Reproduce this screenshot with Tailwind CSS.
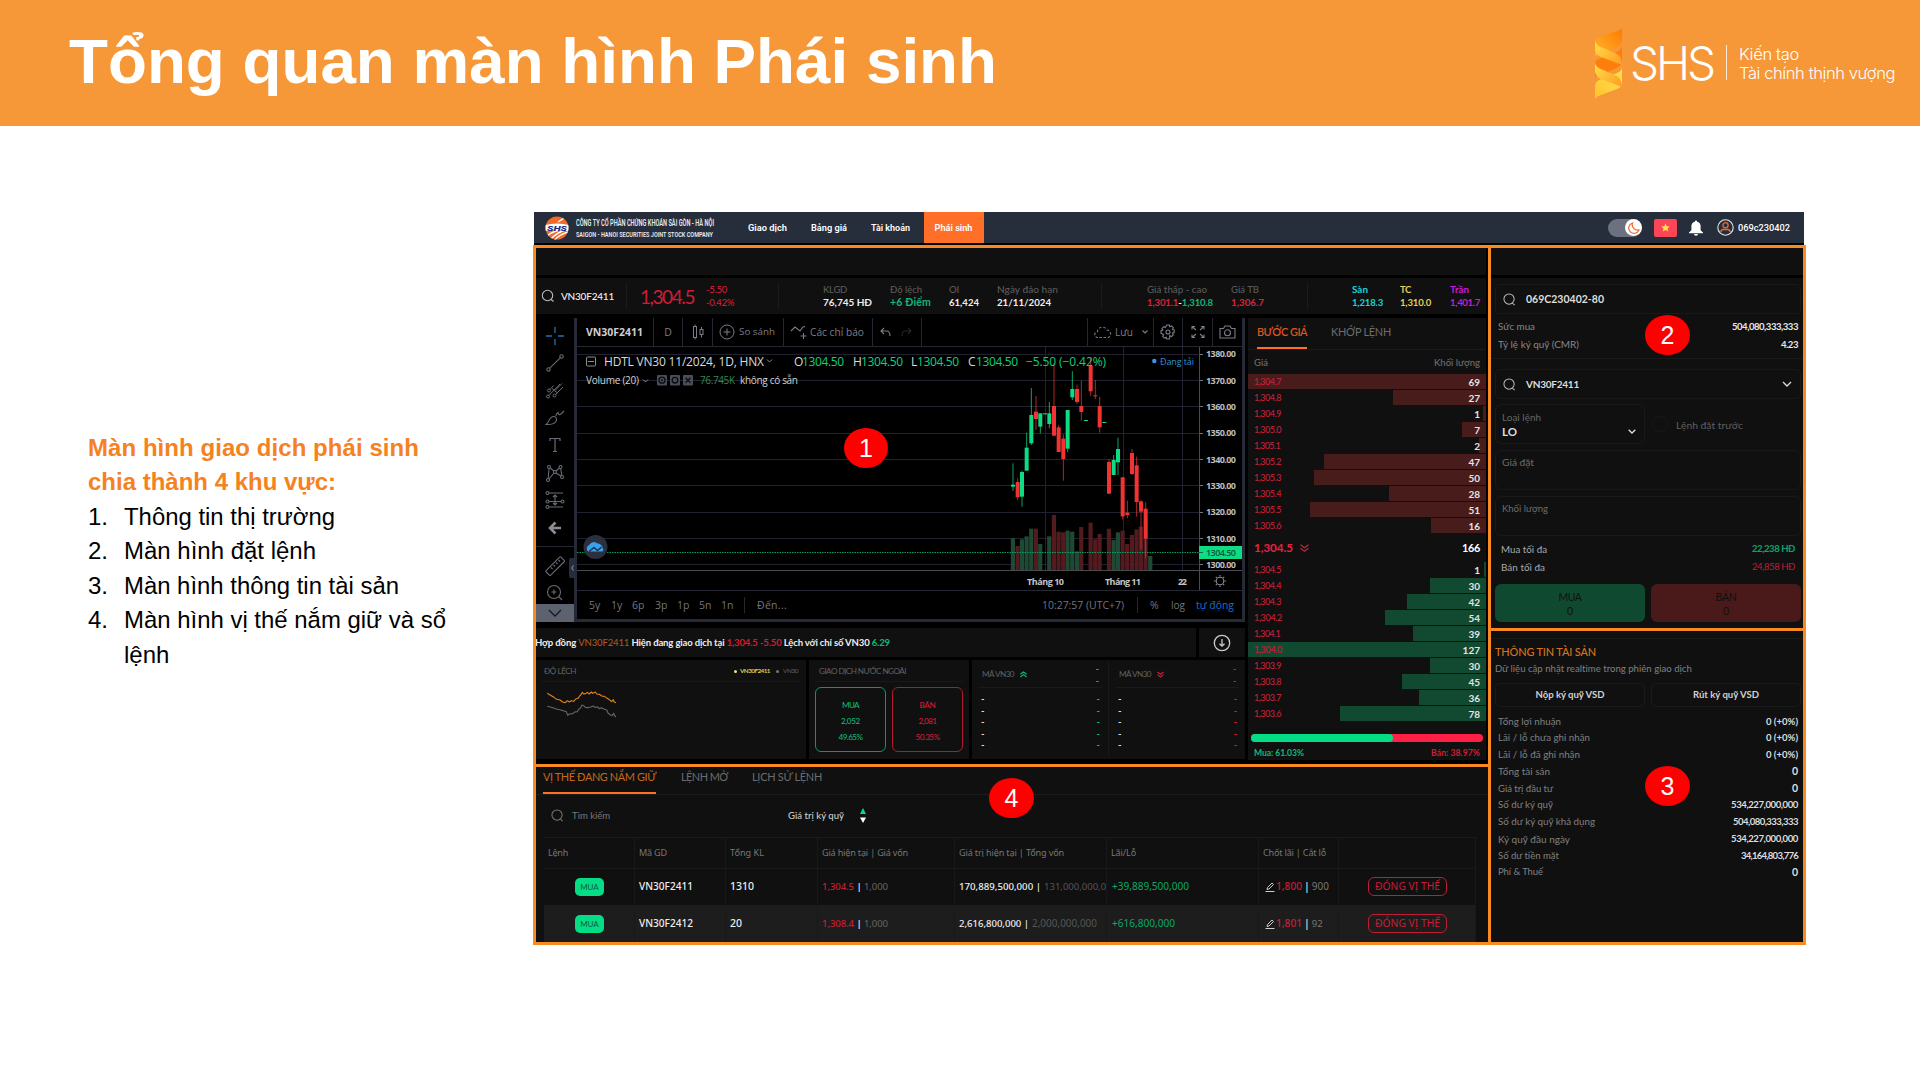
<!DOCTYPE html>
<html lang="vi">
<head>
<meta charset="utf-8">
<title>Tổng quan màn hình Phái sinh</title>
<script src="https://cdn.jsdelivr.net/npm/@tailwindcss/browser@4"></script>
</head>
<body class="relative w-[1920px] h-[1080px] overflow-hidden bg-white whitespace-nowrap leading-none font-['Liberation_Sans',sans-serif]">

<!-- Slide header -->
<header class="flex h-[126px] items-start justify-between bg-[#f69738] text-white">
  <h1 class="pl-[69px] pt-[24px] text-[64px] leading-[74px] font-bold"><span data-w="928">Tổng quan màn hình Phái sinh</span></h1>
  <div class="flex items-start pr-[25px] pt-[27px] font-[Inter,sans-serif]">
    <svg class="w-[28px] h-[72px]" viewBox="0 0 28 72">
      <defs>
        <linearGradient id="g1" x1="0" y1="1" x2="1" y2="0"><stop offset="0" stop-color="#ffb52e"/><stop offset="1" stop-color="#ff7a00"/></linearGradient>
        <linearGradient id="g2" x1="0" y1="0" x2="1" y2="1"><stop offset="0" stop-color="#ffe04a"/><stop offset="1" stop-color="#ff9a22"/></linearGradient>
        <linearGradient id="g3" x1="0" y1="1" x2="1" y2="0"><stop offset="0" stop-color="#ffc32e"/><stop offset="1" stop-color="#ffe24f"/></linearGradient>
      </defs>
      <path d="M0 14 Q1 11 6 9 L22 4 Q26 3 27 0 V14 Q27 18 22 20 L0 29Z" fill="url(#g1)"/>
      <path d="M0 36 Q1 33 6 31 L22 25 Q27 22 27 18 V34 Q27 38 22 41 L0 50Z" fill="#ff7d0a"/>
      <path d="M0 58 Q1 54 6 52 L22 46 Q27 44 27 40 V56 Q27 60 22 62 L6 68 Q1 70 0 72Z" fill="url(#g3)"/>
      <path d="M0 14 Q1 18 6 20 L22 27 Q27 30 27 38 L6 30 Q0 27 0 22Z" fill="url(#g2)"/>
      <path d="M0 36 Q1 40 6 42 L22 49 Q27 52 27 60 L6 52 Q0 49 0 44Z" fill="url(#g2)"/>
    </svg>
    <div class="w-[103px] pl-[7px] pt-[10px] text-[46px] leading-[52px] font-light"><span data-w="83" data-keep>SHS</span></div>
    <div class="mt-[18px] h-[35px] w-px bg-white/80"></div>
    <div class="w-[168px] pl-[12px] pt-[18px] text-[16.5px] leading-[19px] font-light">
      <div><span data-w="60" data-keep>Kiến tạo</span></div>
      <div><span data-w="156" data-keep>Tài chính thịnh vượng</span></div>
    </div>
  </div>
</header>

<div class="flex items-start">
  <!-- Legend -->
  <section class="w-[533px] pl-[88px] pt-[304.5px] text-[24px] leading-[34.6px] text-black">
    <div class="font-bold text-[#f5821f]">
      <div><span data-w="331">Màn hình giao dịch phái sinh</span></div>
      <div><span data-w="248">chia thành 4 khu vực:</span></div>
    </div>
    <ol>
      <li class="flex"><span class="w-[36px]">1.</span><span data-w="211">Thông tin thị trường</span></li>
      <li class="flex"><span class="w-[36px]">2.</span><span data-w="192">Màn hình đặt lệnh</span></li>
      <li class="flex"><span class="w-[36px]">3.</span><span data-w="275">Màn hình thông tin tài sản</span></li>
      <li class="flex"><span class="w-[36px]">4.</span><span><span data-w="322">Màn hình vị thế nắm giữ và sổ</span><br>lệnh</span></li>
    </ol>
  </section>

  <!-- Trading screen -->
  <main class="mt-[86px] w-[1273px] font-[Lato,sans-serif] text-[10.5px]">
    <!-- Navigation -->
    <nav class="ml-px mr-[2px] flex h-[33px] items-center border-b-2 border-black bg-[#262d3b] text-[9.5px] font-semibold text-white font-[Roboto,sans-serif]">
      <svg class="ml-[11px] w-[24px] h-[24px]" viewBox="0 0 24 24">
        <defs><clipPath id="lc"><circle cx="12" cy="12" r="11.5"/></clipPath></defs>
        <circle cx="12" cy="12" r="11.5" fill="#f26a2a"/>
        <g clip-path="url(#lc)"><path d="M0 9 Q12 6 24 9 V15.500 Q12 13 0 15Z" fill="#fff"/><path d="M5 24 Q12 16 23 13 M9 25 Q14 18 24 16 M13 6 Q18 3 22 0 M2 20 Q8 15 18 13" stroke="#fff" stroke-width="1.4" fill="none"/></g>
        <text x="12" y="14.600" text-anchor="middle" font-size="7.500" font-weight="900" font-style="italic" fill="#1c2f8c" textLength="20" lengthAdjust="spacingAndGlyphs">SHS</text>
      </svg>
      <div class="ml-[7px] w-[172px]">
        <svg class="block w-[140px] h-[25px] overflow-visible font-[Roboto,sans-serif] font-semibold" viewBox="0 0 140 25" fill="#e8eaee"><text x="0" y="10.500" font-size="8.800" textLength="138" lengthAdjust="spacingAndGlyphs">CÔNG TY CỔ PHẦN CHỨNG KHOÁN SÀI GÒN - HÀ NỘI</text><text x="0" y="22" font-size="7.500" textLength="137" lengthAdjust="spacingAndGlyphs">SAIGON - HANOI SECURITIES JOINT STOCK COMPANY</text></svg>
      </div>
      <div class="w-[63px]"><span data-w="39">Giao dịch</span></div>
      <div class="w-[60px]"><span data-w="36">Bảng giá</span></div>
      <div class="w-[52.500px]"><span data-w="39">Tài khoản</span></div>
      <div class="flex h-full w-[60px] items-center justify-center bg-[#ff6f27]"><span data-w="38">Phái sinh</span></div>
      <div class="ml-auto flex items-center pr-[14px]">
        <div class="flex h-[18px] w-[34px] items-center justify-end rounded-full bg-[#6b7180]">
          <div class="flex size-[17px] items-center justify-center rounded-full bg-white"><svg class="size-[12px]" viewBox="0 0 12 12" fill="none" stroke="#f26a2a" stroke-width="1.2"><path d="M4.500 1 A5.300 5.300 0 1 0 11 8 A5.500 5.500 0 0 1 4.500 1Z"/></svg></div>
        </div>
        <div class="ml-[12px] flex h-[18px] w-[23px] items-center justify-center rounded-[2px] bg-[#fb4655]"><svg class="size-[9px]" viewBox="0 0 24 24" fill="#ffe14d"><path d="M12 1l3.300 7.600 8.200.7-6.200 5.400 1.900 8L12 18.400 4.800 22.700l1.900-8L.5 9.300l8.200-.7z"/></svg></div>
        <svg class="ml-[12px] w-[14px] h-[16px]" viewBox="0 0 14 16" fill="#fff"><path d="M7 .5a1.200 1.200 0 0 1 1.200 1.200A4.600 4.600 0 0 1 11.600 6v4.200L14 12.500v.8H0v-.8l2.400-2.300V6a4.600 4.600 0 0 1 3.400-4.300A1.200 1.200 0 0 1 7 .5ZM5 14h4a2 1.800 0 0 1-4 0Z"/></svg>
        <svg class="ml-[14px] size-[17px]" viewBox="0 0 17 17" fill="none"><circle cx="8.500" cy="8.500" r="7.700" stroke="#e8e8ea" stroke-width="1.100"/><g stroke="#f26a2a" stroke-width="1.300"><circle cx="8.500" cy="6.300" r="2.600"/><path d="M3.800 13 Q4 10.500 6.500 10.500 H10.500 Q13 10.500 13.200 13"/></g></svg>
        <span class="ml-[4px] font-medium" data-w="52">069c230402</span>
      </div>
    </nav>

    <!-- Highlighted regions -->
    <div class="flex h-[700px] border-3 border-[#f98a22] bg-black">
      <div class="flex w-[955px] flex-col border-r-3 border-[#f98a22]">

        <!-- Region 1: market information -->
        <section class="h-[519px] border-b-3 border-[#f98a22] pr-[2px]">
          <div class="h-[27px] bg-[#101010]"></div>
          <!-- Ticker -->
          <div class="mt-[3px] flex h-[36px] items-center bg-[#101010] text-[#5a5a5a] font-medium leading-[13px]">
            <svg class="ml-[5px] size-[14px]" viewBox="0 0 14 14" fill="none" stroke="#bbb" stroke-width="1.100"><circle cx="6.500" cy="6.500" r="5.200"/><path d="M10 10.500l2.600 2"/></svg>
            <div class="ml-[6px] flex h-[24px] w-[66px] items-center border-r border-[#1c1c1c] text-[11px] text-[#f0f0f0]"><span data-w="53">VN30F2411</span></div>
            <div class="w-[66px] pl-[13px] text-[19px] font-normal text-[#d01c36]"><span data-w="54" data-keep>1,304.5</span></div>
            <div class="h-[24px] w-[86px] border-r border-[#1c1c1c] pl-[13px] leading-[13px] text-[#d01c36]"><div class="-mt-px"><span data-w="21">-5.50</span></div><div><span data-w="28">-0.42%</span></div></div>
            <div class="w-[111px] pl-[44px]"><div><span data-w="24">KLGD</span></div><div class="font-bold text-[#eee]"><span data-w="49">76,745 HĐ</span></div></div>
            <div class="w-[59px]"><div><span data-w="32">Độ lệch</span></div><div class="font-bold text-[#0fb877]"><span data-w="41">+6 Điểm</span></div></div>
            <div class="w-[48px]"><div><span data-w="10">OI</span></div><div class="font-bold text-[#eee]"><span data-w="30">61,424</span></div></div>
            <div class="w-[105px] border-r border-[#1c1c1c]"><div><span data-w="61">Ngày đáo hạn</span></div><div class="font-bold text-[#eee]"><span data-w="54">21/11/2024</span></div></div>
            <div class="w-[129px] pl-[45px]"><div><span data-w="60">Giá thấp - cao</span></div><div class="font-bold text-[#d8233c]"><span data-w="66">1,301.1<span class="text-[#eee]">-</span><span class="text-[#0fb877]">1,310.8</span></span></div></div>
            <div class="w-[77px] border-r border-[#1c1c1c]"><div><span data-w="28">Giá TB</span></div><div class="font-bold text-[#d8233c]"><span data-w="33">1,306.7</span></div></div>
            <div class="w-[92px] pl-[44px] font-bold text-[#17d3d3]"><div><span data-w="16">Sàn</span></div><div><span data-w="31">1,218.3</span></div></div>
            <div class="w-[50px] font-bold text-[#e3cd5c]"><div><span data-w="11">TC</span></div><div><span data-w="31">1,310.0</span></div></div>
            <div class="font-bold text-[#c71ad6]"><div><span data-w="19">Trần</span></div><div><span data-w="30">1,401.7</span></div></div>
          </div>

          <div class="mt-[4px] flex">
            <div class="w-[709px]">
              <!-- Chart widget -->
              <div class="flex h-[304px] w-full font-['Open_Sans',sans-serif] text-[#7b7d87]">
                <div id="tools" class="relative flex w-[38px] flex-col items-center pt-[4px] text-[#696c78]">
                  <div class="flex h-[27.4px] items-center"><svg class="size-[20px]" viewBox="0 0 20 20" fill="none" stroke="#2a6fae" stroke-width="1.300"><path d="M10 1v6M10 13v6M1 10h6M13 10h6"/></svg></div>
                  <div class="flex h-[27.4px] items-center"><svg class="size-[20px]" viewBox="0 0 20 20" fill="none" stroke="currentColor" stroke-width="1.100"><circle cx="3.500" cy="16.500" r="1.700"/><circle cx="16.500" cy="3.500" r="1.700"/><path d="M4.800 15.200L15.200 4.800"/></svg></div>
                  <div class="flex h-[27.4px] items-center"><svg class="size-[20px]" viewBox="0 0 20 20" fill="none" stroke="currentColor" stroke-width="1"><circle cx="4" cy="10.500" r="1.500"/><circle cx="9.500" cy="15.500" r="1.500"/><circle cx="3" cy="16.500" r="1.500"/><path d="M4 15.300L15 4M5 9.500l3.500-4M7 8.500l5.500 4.500M10.500 14.500L18 7M10 10.500l7-7"/></svg></div>
                  <div class="flex h-[27.4px] items-center"><svg class="size-[20px]" viewBox="0 0 20 20" fill="none" stroke="currentColor" stroke-width="1.100"><path d="M1 16.500C4 15 4 8.500 8.500 8.500c3 0 4 3 2 5.500-2 2.500-6 2.700-9.500 2.500ZM11 8c0-3 1-3 2-3.500 0 2 1.500 2.700 3 1.500L19 3"/></svg></div>
                  <div class="flex h-[27.4px] items-center"><svg class="size-[20px]" viewBox="0 0 20 20" fill="none" stroke="currentColor" stroke-width="1.200"><path d="M5 6V3.500h10V6M10 3.500v13M8 16.500h4"/></svg></div>
                  <div class="flex h-[27.4px] items-center"><svg class="size-[20px]" viewBox="0 0 20 20" fill="none" stroke="currentColor" stroke-width="1.100"><circle cx="4" cy="4" r="1.500"/><circle cx="3" cy="17" r="1.500"/><circle cx="10" cy="9" r="1.500"/><circle cx="15.500" cy="4" r="1.500"/><circle cx="17" cy="14" r="1.500"/><path d="M4 5.500L3.200 15.500M5 5l4 3M11 8l3.500-3M15.700 5.500l1.100 7M4 16l5-6M11 10l5 3"/></svg></div>
                  <div class="flex h-[27.4px] items-center"><svg class="size-[20px]" viewBox="0 0 20 20" fill="none" stroke="currentColor" stroke-width="1.100"><circle cx="2.500" cy="3" r="1.500"/><circle cx="2.500" cy="17" r="1.500"/><circle cx="2.500" cy="11.500" r="1.500"/><circle cx="17.500" cy="11.500" r="1.500"/><path d="M4 3h14M4 17h14M4 11.500h12M10 5v10M8 7l2-2 2 2M8 13l2 2 2-2"/></svg></div>
                  <div class="mt-px flex h-[27.4px] items-center"><svg class="size-[20px]" viewBox="0 0 20 20" fill="none" stroke="#8a8c96" stroke-width="2.600"><path d="M16 10H6M10.500 4.500L5 10l5.500 5.500"/></svg></div>
                  <div class="mt-[4px] h-px w-full bg-[#252833]"></div>
                  <div class="mt-[5px] flex h-[27.4px] items-center"><svg class="size-[20px]" viewBox="0 0 20 20" fill="none" stroke="currentColor" stroke-width="1.100"><rect x="-.5" y="7" width="21" height="6.500" rx="1" transform="rotate(-45 10 10)"/><path d="M6 11.500l1.500 1.500M8.500 9l1.500 1.500M11 6.500l1.500 1.500M13.500 4l1.500 1.500"/></svg></div>
                  <div class="flex h-[26px] items-center"><svg class="size-[18px]" viewBox="0 0 18 18" fill="none" stroke="currentColor" stroke-width="1.100"><circle cx="8" cy="8" r="6.500"/><path d="M12.700 12.700L16 16M8 5.500v5M5.500 8h5"/></svg></div>
                  <div class="absolute inset-x-0 bottom-0 flex h-[18px] items-center justify-center bg-[#5c636e]"><svg class="w-[14px] h-[8px]" viewBox="0 0 14 8" fill="none" stroke="#15181f" stroke-width="1.300"><path d="M1 1l6 6 6-6"/></svg></div>
                  <div class="absolute right-[-1px] top-[240px] flex h-[20px] w-[6px] items-center justify-center rounded-l-[2px] bg-[#252c3d]"><svg class="w-[3px] h-[6px]" viewBox="0 0 3 6" fill="none" stroke="#9a9ca6" stroke-width="1"><path d="M2.500 .5L.7 3l1.800 2.500"/></svg></div>
                </div>

                <div class="flex w-[671px] flex-col border-x-3 border-b-3 border-[#262a36]">
                  <!-- Chart toolbar -->
                  <div class="flex h-[29px] border-b border-[#252833] text-[10.5px] *:flex *:items-center *:border-[#252833]">
                    <div class="w-[77px] border-r pl-[9px] font-bold text-[#ccced3] text-[10.5px]"><span data-w="57">VN30F2411</span></div>
                    <div class="w-[29px] justify-center border-r">D</div>
                    <div class="w-[30px] justify-center border-r"><svg class="w-[12px] h-[16px]" viewBox="0 0 12 16" fill="none" stroke="currentColor" stroke-width="1"><path d="M3 .5v2M3 13.500v2M9.500 3v2.500M9.500 10.500v3"/><rect x="1.500" y="2.500" width="3" height="11"/><rect x="8" y="5.500" width="3" height="5"/></svg></div>
                    <div class="w-[71px] border-r pl-[6px]"><svg class="size-[16px] shrink-0" viewBox="0 0 16 16" fill="none" stroke="currentColor" stroke-width="1"><circle cx="8" cy="8" r="7"/><path d="M8 4.500v7M4.500 8h7"/></svg><span class="ml-[4px]" data-w="36">So sánh</span></div>
                    <div class="w-[89px] border-r pl-[6px]"><svg class="w-[18px] h-[16px] shrink-0" viewBox="0 0 18 16" fill="none" stroke="currentColor" stroke-width="1.100"><path d="M1 7l4-4 5 4 3-4 2-.5M13.500 9v6M10.500 12h6"/></svg><span class="ml-[2px]" data-w="54">Các chỉ báo</span></div>
                    <div class="w-[49px] gap-[10px] border-r pl-[7px]"><svg class="w-[11px] h-[10px]" viewBox="0 0 11 10" fill="none" stroke="currentColor" stroke-width="1.100"><path d="M4 1L1 4l3 3M1 4h5.500Q10 4 10 9"/></svg><svg class="w-[11px] h-[10px] text-[#24262e]" viewBox="0 0 11 10" fill="none" stroke="currentColor" stroke-width="1.100"><path d="M7 1l3 3-3 3M10 4H4.500Q1 4 1 9"/></svg></div>
                    <div class="ml-auto w-[67px] border-x pl-[6px]"><svg class="w-[18px] h-[14px]" viewBox="0 0 18 14" fill="none" stroke="currentColor" stroke-width="1.100" stroke-dasharray="2.500 1.800"><path d="M4 12.500a3 3 0 0 1-.5-6A5 5 0 0 1 13 5a4 4 0 0 1 1.500 7.500Z"/></svg><span class="ml-[3px]" data-w="18">Lưu</span><svg class="ml-[9px] w-[6px] h-[4px]" viewBox="0 0 6 4" fill="none" stroke="currentColor" stroke-width="1.100"><path d="M.5.5L3 3 5.500.5"/></svg></div>
                    <div class="w-[29px] justify-center border-r"><svg class="size-[16px]" viewBox="0 0 16 16" fill="none" stroke="currentColor" stroke-width="1.100"><circle cx="8" cy="8" r="2"/><path d="M6.700 1h2.600l.5 1.800 1.700-.9 1.800 1.800-.9 1.700 1.800.6v2.600l-1.800.5.9 1.700-1.800 1.800-1.700-.9L9.300 15H6.700l-.5-1.800-1.700.9-1.800-1.800.9-1.700L1 9.300V6.700l1.800-.5-.9-1.700 1.800-1.800 1.700.9Z"/></svg></div>
                    <div class="w-[30px] justify-center border-r"><svg class="size-[14px]" viewBox="0 0 14 14" fill="none" stroke="currentColor" stroke-width="1.100"><path d="M1 4.500V1.500h3M1 1.500l4 3.500M13 4.500V1.500h-3M13 1.500l-4 3.500M1 9.500v3h3M1 12.500l4-3.500M13 9.500v3h-3M13 12.500l-4-3.500"/></svg></div>
                    <div class="w-[29px] justify-center"><svg class="w-[17px] h-[14px]" viewBox="0 0 17 14" fill="none" stroke="currentColor" stroke-width="1.100"><path d="M1 3.500h3.500L6 1h5l1.500 2.500H16V13H1Z"/><circle cx="8.500" cy="7.700" r="3"/></svg></div>
                  </div>
                  <!-- Chart canvas -->
                  <svg id="chart" class="block w-[665px] h-[243px] font-['Open_Sans',sans-serif]" viewBox="577 347 665 243"></svg>
                  <!-- Range bar -->
                  <div class="flex h-[29px] items-center border-t border-[#252833] pl-[12px] text-[10.5px] text-[#73757f]">
                    <span class="w-[22px]">5y</span><span class="w-[21px]">1y</span><span class="w-[23px]">6p</span><span class="w-[22px]">3p</span><span class="w-[22px]">1p</span><span class="w-[22px]">5n</span><span class="w-[23px]">1n</span>
                    <span class="h-[16px] w-px bg-[#252833]"></span><span class="ml-[12px]" data-w="30">Đến...</span>
                    <span class="ml-auto" data-w="82">10:27:57 (UTC+7)</span><span class="ml-[13px] h-[16px] w-px bg-[#252833]"></span>
                    <span class="ml-[12px] w-[21px]">%</span><span class="w-[25px]"><span data-w="14">log</span></span><span class="mr-[8px] text-[#1b6fd0]" data-w="38">tự động</span>
                  </div>
                </div>
              </div>

              <!-- Ticker message -->
              <div class="mt-[6px] flex h-[29px] gap-[3px]">
                <div class="flex w-[660px] items-center overflow-hidden bg-[#101010] text-[10.5px] font-bold text-[#ededed]"><span class="-ml-px" data-w="355">Hợp đồng <span class="font-medium text-[#a5561b]">VN30F2411</span> Hiện đang giao dịch tại <span class="text-[#d01c36]">1,304.5 -5.50</span> Lệch với chỉ số VN30 <span class="text-[#0fb877]">6.29</span></span></div>
                <div class="flex flex-1 items-center justify-center bg-[#101010]"><svg class="size-[18px]" viewBox="0 0 18 18" fill="none" stroke="#ccc" stroke-width="1.300"><circle cx="9" cy="9" r="7.700"/><path d="M9 5v7M6.500 9.700L9 12.200l2.500-2.500"/></svg></div>
              </div>

              <!-- Market cards -->
              <div class="mt-[3px] flex h-[99px] gap-[3px] text-[9px] text-[#626262]">
                <div class="w-[270px] bg-[#101010] px-[6px]">
                  <div class="flex h-[22px] items-center border-b border-[#191919] pl-[2px] pr-[2px] pt-px"><span data-w="32">ĐỘ LỆCH</span>
                    <span class="ml-auto size-[3px] rounded-full bg-[#efe070]"></span><span class="ml-[3px] text-[7px] font-bold text-[#d8cb57]" data-w="30">VN30F2411</span><span class="ml-[6px] size-[3px] rounded-full bg-[#777]"></span><span class="ml-[4px] text-[7px]" data-w="15">VN30</span></div>
                  <svg class="mt-[8px] ml-[5px] block w-[70px] h-[28px]" viewBox="53 210 210 84" fill="none" stroke-width="3.300" stroke-linejoin="round"><path stroke="#e8821c" d="M54 220l12 7 8 5 8 6 10 2 8 6 8 2 6-6 6 4 6-4 7 2 6-7 7-2 5-7 4-4 4-7 4 5 6-1 5-4 6 5 6-6 4 4 8-4 4 6 9 1 6 5 8 1 6 4 5 3 5 4 6 5 5-6 2 6 6 3"/><path stroke="#686868" d="M54 259l12 3 15 5 14 3 16 5 4 11 5-4 10-1 6-5 8-1 4-7 5-3 5-10 5 2 5 5 8 1 8-2 8-3 5 4 8-1 5 5 6-3 8 4 8 3 4 9 6 5 6 3 5-7 3 7 4 4"/></svg>
                </div>
                <div class="w-[160px] bg-[#101010] px-[6px]">
                  <div class="flex h-[22px] items-center border-b border-[#191919] pl-[4px] pt-px"><span data-w="87">GIAO DỊCH NƯỚC NGOÀI</span></div>
                  <div class="mt-[5px] flex gap-[6px] text-[9px] font-medium leading-[15.2px] text-center">
                    <div class="h-[65px] w-[71px] rounded-[6px] border border-[#0c9862] pt-[9px] text-[#0fb877]"><div><span data-w="17">MUA</span></div><div><span data-w="19">2,052</span></div><div><span data-w="24">49.65%</span></div></div>
                    <div class="h-[65px] w-[71px] rounded-[6px] border border-[#b01a31] pt-[9px] text-[#d01c36]"><div><span data-w="16">BÁN</span></div><div><span data-w="18">2,081</span></div><div><span data-w="24">50.35%</span></div></div>
                  </div>
                </div>
                <div class="flex flex-1 bg-[#101010] py-[2px]" id="vn30"></div>
              </div>
            </div>

            <!-- Order book -->
            <div class="ml-[3px] flex h-[442px] flex-1 flex-col bg-[#101010] text-[#6d6d6d]">
              <div class="flex h-[32px] border-b border-[#1c1c1c] text-[12px]">
                <div class="ml-[9px] flex h-[31px] w-[50px] items-center border-b-2 border-[#ff6f27] font-semibold text-[#dd5520]"><span class="pb-[1px]" data-w="50">BƯỚC GIÁ</span></div>
                <div class="ml-[24px] flex h-[29px] items-center"><span data-w="60">KHỚP LỆNH</span></div>
              </div>
              <div class="flex h-[24px] items-center justify-between px-[6px] pt-px font-medium"><span data-w="14">Giá</span><span data-w="46">Khối lượng</span></div>
              <div id="asks"></div>
              <div class="flex h-[28px] items-center px-[6px] text-[12px] font-bold text-[#f0203f]"><span data-w="39">1,304.5</span><svg class="ml-[7px] w-[9px] h-[8px]" viewBox="0 0 9 8" fill="none" stroke="#b82a3c" stroke-width="1.200"><path d="M.5.700L4.500 3.700 8.500.700M.5 4.200l4 3 4-3"/></svg><span class="ml-auto text-white" data-w="18">166</span></div>
              <div id="bids"></div>
              <div class="mx-[3px] mt-[12px] flex h-[8px] rounded-full bg-[#ff2045]"><div class="w-[61.03%] rounded-full bg-[#05dc86]"></div></div>
              <div class="mt-[4px] flex justify-between px-[6px] text-[9.5px] font-bold leading-[13px]"><span class="text-[#0fb877]" data-w="50">Mua: 61.03%</span><span class="text-[#d01c36]" data-w="49">Bán: 38.97%</span></div>
            </div>
          </div>
        </section>

        <!-- Region 4: positions and order log -->
        <section class="flex-1 overflow-hidden bg-[#101010]">
          <div class="flex h-[28px] border-b border-[#1c1c1c] pl-[7px] text-[12px] text-[#6c6c6c]">
            <div class="flex h-[27px] w-[113px] items-center border-b-2 border-[#ff6f27] pb-[5px] text-[#c06a1c]"><span data-w="113">VỊ THẾ ĐANG NẮM GIỮ</span></div>
            <div class="ml-[25px] flex h-[20px] w-[71px] items-center"><span data-w="47">LỆNH MỞ</span></div>
            <div class="flex h-[20px] items-center"><span data-w="70">LỊCH SỬ LỆNH</span></div>
          </div>
          <div class="flex h-[42px] items-center pb-[2px] pl-[15px] text-[#777]">
            <svg class="size-[13px]" viewBox="0 0 14 14" fill="none" stroke="#777" stroke-width="1.100"><circle cx="6.500" cy="6.500" r="5.500"/><path d="M10 11l2.600 2"/></svg>
            <span class="ml-[8px] w-[216px]"><span data-w="38">Tìm kiếm</span></span><span class="pt-[1px] font-medium text-[#ccc]" data-w="56">Giá trị ký quỹ</span>
            <svg class="ml-[16px] mt-px w-[6px] h-[15px]" viewBox="0 0 6 15"><path d="M0 6L3 0l3 6Z" fill="#05dc86"/><path d="M0 9.500h6L3 15Z" fill="#fff"/></svg>
          </div>
          <div id="positions" class="ml-[8px] w-[932px] border-t border-[#1a1a1a] font-['Noto_Sans',sans-serif] text-[10.5px]"></div>
        </section>
      </div>

      <div class="flex w-[312px] flex-col text-[10.5px]">
        <!-- Region 2: order entry -->
        <section class="h-[383px] border-b-3 border-[#f98a22] bg-[#101010] text-[#888]">
          <div class="h-[30px] border-b-3 border-black"></div>
          <div class="pl-[4px] pr-[2px] pt-[6px]">
            <div class="flex h-[30px] items-center rounded-[5px] border border-[#191919] pl-[7px] text-[11px] font-bold text-[#ddd]"><svg class="size-[13px]" viewBox="0 0 14 14" fill="none" stroke="#bbb" stroke-width="1.100"><circle cx="6.500" cy="6.500" r="5.500"/><path d="M10 11l2.600 2"/></svg><span class="ml-[10px]" data-w="78">069C230402-80</span></div>
            <div class="flex h-[19px] items-end justify-between px-[3px] leading-[13px]"><span data-w="37">Sức mua</span><span class="font-bold text-[#e8e8e8]" data-w="66">504,080,333,333</span></div>
            <div class="flex h-[18px] items-end justify-between px-[3px] leading-[13px]"><span data-w="81">Tỷ lệ ký quỹ (CMR)</span><span class="font-bold text-[#e8e8e8]" data-w="17">4.23</span></div>
          </div>
          <div class="mt-[7px] border-t border-[#1a1a1a]"></div>
          <div class="pl-[4px] pr-[2px] pt-[10px]">
            <div class="flex h-[30px] items-center rounded-[5px] border border-[#191919] pl-[7px] text-[11px] font-bold text-[#ddd]"><svg class="size-[13px]" viewBox="0 0 14 14" fill="none" stroke="#bbb" stroke-width="1.100"><circle cx="6.500" cy="6.500" r="5.500"/><path d="M10 11l2.600 2"/></svg><span class="ml-[10px]" data-w="53">VN30F2411</span><svg class="ml-auto mr-[8px] w-[10px] h-[6px]" viewBox="0 0 10 6" fill="none" stroke="#ddd" stroke-width="1.300"><path d="M1 1l4 4 4-4"/></svg></div>
            <div class="mt-[5px] flex h-[40px] items-center">
              <div class="flex h-[40px] w-[150px] items-center justify-between rounded-[6px] border border-[#191919] pl-[6px] pr-[8px]"><div class="pt-px leading-[14.500px]"><div class="text-[#666]"><span data-w="39">Loại lệnh</span></div><div class="text-[11.5px] font-bold text-[#ddd]">LO</div></div><svg class="mt-[14px] w-[8px] h-[5px]" viewBox="0 0 8 5" fill="none" stroke="#ddd" stroke-width="1.300"><path d="M.7.700L4 4 7.300.700"/></svg></div>
              <span class="ml-[7px] size-[16px] rounded-full border border-[#191919]"></span><span class="ml-[8px] pt-[2px] text-[#5f5f5f]" data-w="67">Lệnh đặt trước</span>
            </div>
            <div class="mt-[6px] h-[40px] rounded-[6px] border border-[#191919] pl-[6px] pt-[4px] leading-[15px] text-[#6c6c6c]"><span data-w="32">Giá đặt</span></div>
            <div class="mt-[6px] h-[40px] rounded-[6px] border border-[#191919] pl-[6px] pt-[4px] leading-[15px] text-[#6c6c6c]"><span data-w="46">Khối lượng</span></div>
            <div class="flex h-[48px] flex-col justify-center pb-[4px] pl-[6px] pr-[6px] leading-[18px]">
              <div class="flex justify-between text-[#aaa]"><span data-w="46">Mua tối đa</span><span class="font-bold text-[#0ba46a]" data-w="43">22,238 HĐ</span></div>
              <div class="flex justify-between text-[#aaa]"><span data-w="44">Bán tối đa</span><span class="text-[#c01c35]" data-w="43">24,858 HĐ</span></div>
            </div>
            <div class="flex gap-[6px] text-center leading-[14px] text-[#111]">
              <div class="h-[38px] w-[150px] rounded-[6px] bg-[#0f4a30] pt-[6px]"><div class="text-[11.5px]"><span data-w="23">MUA</span></div><div>0</div></div>
              <div class="h-[38px] w-[150px] rounded-[6px] bg-[#4a1919] pt-[6px]"><div class="text-[11.5px]"><span data-w="21">BÁN</span></div><div>0</div></div>
            </div>
          </div>
        </section>

        <!-- Region 3: assets -->
        <section class="flex-1 bg-[#101010] pt-[7px]">
          <div class="border-t border-[#1a1a1a] pl-[4px] pr-[2px] pt-[4px]">
            <div class="text-[12px] leading-[17px] font-medium text-[#d9741c]"><span data-w="101">THÔNG TIN TÀI SẢN</span></div>
            <div class="leading-[17px] text-[#808080]"><span data-w="197">Dữ liệu cập nhật realtime trong phiên giao dịch</span></div>
            <div class="mt-[6px] flex gap-[6px] font-bold text-[#d0d0d0] *:flex *:h-[24px] *:w-[150px] *:items-center *:justify-center *:rounded-[5px] *:border *:border-[#1a1a1a]"><div><span data-w="69">Nộp ký quỹ VSD</span></div><div><span data-w="66">Rút ký quỹ VSD</span></div></div>
            <div id="assets" class="mt-[6px] px-[3px] text-[#808080]"></div>
          </div>
        </section>
      </div>
    </div>
  </main>
</div>

<!-- Numbered markers -->
<div class="absolute left-[844px] top-[428px] flex h-[40px] w-[44px] items-center justify-center rounded-[50%] bg-[#fe0000] text-[25px] text-white">1</div>
<div class="absolute left-[1645px] top-[315px] flex h-[40px] w-[45px] items-center justify-center rounded-[50%] bg-[#fe0000] text-[25px] text-white">2</div>
<div class="absolute left-[1645px] top-[766px] flex h-[40px] w-[45px] items-center justify-center rounded-[50%] bg-[#fe0000] text-[25px] text-white">3</div>
<div class="absolute left-[989px] top-[778px] flex h-[40px] w-[45px] items-center justify-center rounded-[50%] bg-[#fe0000] text-[25px] text-white">4</div>

<script>
const $ = id => document.getElementById(id);

// Order book
const asks = [['1,304.7',69,27],['1,304.8',27,27],['1,304.9',1,27],['1,305.0',7,27],['1,305.1',2,26],['1,305.2',47,27],['1,305.3',50,27],['1,305.4',28,27],['1,305.5',51,27],['1,305.6',16,27]];
const bids = [['1,304.5',1,27],['1,304.4',30,27],['1,304.3',42,27],['1,304.2',54,28],['1,304.1',39,26],['1,304.0',127,28],['1,303.9',30,27],['1,303.8',45,27],['1,303.7',36,27],['1,303.6',78,27]];
const book = (rows, max, color) => rows.map(([p, v, w]) => `
  <div class="relative mb-px flex h-[15px] items-center justify-between px-[6px] text-[10px]">
    <div class="absolute inset-y-0 right-0 ${color}" style="width:${Math.max(v / max, .01) * 100}%"></div>
    <span class="relative font-medium text-[#c2203c]" data-w="${w}">${p}</span><span class="relative font-bold text-[#e4e4e4]">${v}</span>
  </div>`).join('');
$('asks').innerHTML = book(asks, 69, 'bg-[#491c1c]');
$('bids').innerHTML = book(bids, 127, 'bg-[#124a31]');

// VN30 gainers and losers
const up = '<path d="M.5 3.700L4.500.700l4 3M.5 7.200l4-3 4 3"/>', down = '<path d="M.5.700L4.500 3.700 8.500.700M.5 4.200l4 3 4-3"/>';
$('vn30').innerHTML = [['text-[#0fb877]', up, 'border-r w-[137px]'], ['text-[#d01c36]', down, 'flex-1']].map(([c, ic, b]) => `
  <div class="${b} border-[#191919] px-[6px]">
    <div class="flex h-[26px] items-center border-b border-[#191919] pl-[4px] pr-[3px]"><span data-w="32">MÃ VN30</span>
      <svg class="ml-[6px] w-[7px] h-[7px] ${c}" viewBox="0 0 9 8" fill="none" stroke="currentColor" stroke-width="1.500">${ic}</svg>
      <div class="ml-auto ${c} font-bold leading-[11.500px]"><div>-</div><div>-</div></div></div>
    <div class="pt-[5px] font-bold text-[9.5px]">${`<div class="flex h-[11.500px] items-center justify-between pl-[3px] pr-[2px] text-[#ddd]"><span>-</span><span class="${c}">-</span></div>`.repeat(5)}</div>
  </div>`).join('');

// Assets
$('assets').innerHTML = [['Tổng lợi nhuận',63,'0 (+0%)',32],['Lãi / lỗ chưa ghi nhận',92,'0 (+0%)',32],['Lãi / lỗ đã ghi nhận',82,'0 (+0%)',32],['Tổng tài sản',52,'0',6],['Giá trị đầu tư',55,'0',6],['Số dư ký quỹ',55,'534,227,000,000',67],['Số dư ký quỹ khả dụng',97,'504,080,333,333',65],['Ký quỹ đầu ngày',72,'534,227,000,000',67],['Số dư tiền mặt',61,'34,164,803,776',57],['Phí &amp; Thuế',45,'0',6]]
  .map(([a, w, b, v]) => `<div class="flex h-[16.780px] items-center justify-between"><span data-w="${w}">${a}</span><span class="font-bold text-[#ddd]" data-w="${v}">${b}</span></div>`).join('');

// Positions
const pen = '<svg class="mr-[1px] size-[10px] shrink-0" viewBox="0 0 10 10" fill="none" stroke="#ccc" stroke-width="1"><path d="M2 7.500l.5-2L7 1l1.500 1.500L4 7Zm-1.500 2h9"/></svg>';
const row = (cells, cls) => `<div class="grid grid-cols-[91px_91px_92px_137px_152px_152px_80px_1fr] ${cls} *:flex *:items-center *:overflow-hidden *:border-r *:border-[#191919] *:pl-[4px]">${cells.map(c => `<div>${c}</div>`).join('')}</div>`;
const pos = (a, b, c, c1, w1, c2, w2, d, w3, e, w4, e2, cls) => row([
  '<span class="ml-[27px] flex h-[18px] w-[29px] items-center justify-center rounded-[5px] bg-[#05dc86] text-[8px] text-[#0a5c3c] font-[Lato,sans-serif]">MUA</span>',
  `<span class="font-medium text-[#eee]" data-w="54">${a}</span>`,
  `<span class="font-medium text-[#eee]">${b}</span>`,
  `<span data-w="66" class="text-[#666]"><span class="font-medium text-[#c81d36]">${c}</span> <span class="text-white font-medium">|</span> 1,000</span>`,
  `<span data-w="${w1}" class="font-medium text-[#eee]">${c1} |</span><span class="ml-[3px] text-[#555]" data-w="${w2}">${c2}</span>`,
  `<span class="ml-px text-[#0ba868]" data-w="${w3}">${d}</span>`,
  `<span class="ml-[2px]"></span>${pen}<span class="text-[#c81d36] font-medium" data-w="26">${e}</span><span class="ml-[2px] text-white">|</span><span class="ml-[2px] text-[#777]" data-w="${w4}">${e2}</span>`,
  '<span class="ml-[25px] flex h-[19px] w-[79px] items-center justify-center rounded-[6px] border border-[#c01c35] text-[11px] text-[#c81d36]"><span data-w="65">ĐÓNG VỊ THẾ</span></span>'
], cls + ' *:pb-[1px]');
$('positions').innerHTML =
  row([['Lệnh',20],['Mã GD',28],['Tổng KL',34],['Giá hiện tại | Giá vốn',86],['Giá trị hiện tại | Tổng vốn',105],['Lãi/Lỗ',25],['Chốt lãi | Cắt lỗ',63],['',0]].map(([t, w]) => t && `<span data-w="${w}">${t}</span>`), 'h-[30px] text-[10px] text-[#777]')
  + pos('VN30F2411', '1310', '1,304.5', '170,889,500,000', 82, '131,000,000,000', 73, '+39,889,500,000', 77, '1,800', 17, '900', 'h-[37px] border-t border-[#1a1a1a]')
  + pos('VN30F2412', '20', '1,308.4', '2,616,800,000', 70, '2,000,000,000', 65, '+616,800,000', 63, '1,801', 11, '92', 'h-[38px] bg-[#1d1d1d]');

// Chart: candle geometry is in thirds of a pixel, offset (960, 340)
const G = '#0ddc84', R = '#f03434';
const candles = [[159,370,453,434,440,G],[173,415,480,426,472,R],[186,392,500,396,470,G],[200,278,392,323,392,G],[214,144,315,225,310,G],[228,168,270,215,237,R],[241,220,280,220,260,G],[255,220,223,220,223,G],[268,186,265,220,252,G],[282,70,288,198,287,R],[296,255,336,262,336,R],[310,283,422,296,357,R],[323,210,336,210,326,G],[337,93,180,147,172,G],[351,134,192,147,186,R],[364,122,242,198,216,R],[378,240,243,240,243,G],[392,55,168,78,154,R],[406,120,177,166,169,R],[419,170,278,198,262,R],[433,246,249,246,249,G],[447,358,462,366,461,R],[461,345,405,360,405,G],[474,293,405,327,367,G],[488,411,538,412,529,R],[502,482,535,518,525,R],[516,327,405,339,402,R],[530,350,530,376,486,R],[543,480,628,484,515,R],[557,487,653,506,596,R]];
const vols = [[159,594,G],[173,618,R],[186,598,G],[200,589,G],[214,566,G],[228,566,R],[241,612,G],[268,589,G],[282,525,R],[296,575,R],[310,577,R],[323,572,G],[337,575,G],[351,634,G],[364,561,R],[392,548,R],[406,598,R],[419,582,R],[447,566,R],[461,600,G],[474,577,G],[488,572,R],[502,612,R],[516,585,R],[530,568,R],[543,560,R],[557,595,R],[571,648,G]];
const prices = [1380,1370,1360,1350,1340,1330,1320,1310,1300];
const t = (x, y, w, s, fill, size = 10.5, extra = '') => `<text x="${x}" y="${y}" textLength="${w}" font-size="${size}" fill="${fill}" ${extra}>${s}</text>`;
let s = '<path d="' + prices.map((_, i) => `M577 ${Math.round(353.500 + i * 26.350) + .5}H1199`).join('') + 'M1045.500 347V570M1123.500 347V570M1182.500 347V570" stroke="#20232f" fill="none"/>';
s += '<g transform="translate(960 340) scale(.33333)">';
s += vols.map(([x, y, c]) => `<rect x="${x - 6.500}" y="${y}" width="12.500" height="${690 - y}" fill="${c === G ? '#1e4a35' : '#531b1f'}"/>`).join('');
s += candles.map(([x, h, l, a, b, c]) => `<path d="M${x} ${h}V${l}" stroke="${c}" stroke-width="3" opacity=".75"/><rect x="${x - 6}" y="${a}" width="12" height="${b - a}" fill="${c}"/>`).join('') + '</g>';
s += '<path d="M577 552.500H1199" stroke="#0a9c60" stroke-dasharray="1.500 1"/><path d="M577 570.500H1242M1199.500 347V590" stroke="#4a4b50"/>';
s += prices.map((p, i) => `<path d="M1200 ${Math.round(353.500 + i * 26.350) + .5}h3" stroke="#777"/>` + t(1206, 357.300 + i * 26.350, 30, p + '.00', '#bdbdbf', 9, 'font-weight="700"')).join('');
s += '<rect x="1199" y="546" width="43" height="13" fill="#0ddc84"/><path d="M1199 552.500h4" stroke="#0a6b42"/>' + t(1206, 556, 30, '1304.50', '#0a5836', 9, 'font-weight="600"');
s += t(1027, 584.500, 37, 'Tháng 10', '#c4c4c6', 9, 'font-weight="700"') + t(1105, 584.500, 36, 'Tháng 11', '#c4c4c6', 9, 'font-weight="700"') + t(1178, 584.500, 9, '22', '#c4c4c6', 9, 'font-weight="700"');
s += '<g fill="none" stroke="#8a8c96" stroke-width="1.100"><circle cx="1220" cy="581" r="3.800"/><path d="M1220 575v1.500M1220 585.500v1.500M1214 581h1.500M1224.500 581h1.500M1215.800 576.800l1 1M1223.200 584.200l1 1M1215.800 585.200l1-1M1223.200 577.800l1-1"/></g>';
s += '<g fill="none" stroke="#8a8c96"><rect x="586.500" y="357" width="9" height="9" rx="1"/><path d="M588 361.500h6M767 359.500l2.500 2.500 2.500-2.500M643 379.500l2.500 2.500 2.500-2.500"/></g>';
s += t(604, 365.500, 160, 'HDTL VN30 11/2024, 1D, HNX', '#d8d9dc', 12, 'font-weight="500"');
s += [[794,'O',802,'1304.50'],[853,'H',861,'1304.50'],[911,'L',917,'1304.50'],[968,'C',976,'1304.50']].map(([x, a, y, b]) => t(x, 365.500, y - x, a, '#d8d9dc', 12, 'font-weight="500"') + t(y, 365.500, 42, b, '#0cd07f', 12, 'font-weight="500"')).join('');
s += t(1026, 365.500, 80, '−5.50 (−0.42%)', '#0cd07f', 12, 'font-weight="500"');
s += '<circle cx="1154.300" cy="361" r="2.200" fill="#2f9be8"/>' + t(1160, 364.500, 34, 'Đang tải', '#2f93da', 9);
s += t(586, 384.300, 53, 'Volume (20)', '#d2d3d6', 10, 'font-weight="500"');
s += '<g fill="#4a4c57"><rect x="657" y="375" width="10" height="10.500" rx="1"/><rect x="670" y="375" width="10" height="10.500" rx="1"/><rect x="683" y="375" width="10" height="10.500" rx="1"/></g><g fill="none" stroke="#0c0d12" stroke-width="1.300"><circle cx="662" cy="380.200" r="3"/><circle cx="675" cy="380.200" r="2.800"/><path d="M685.500 377.700l5 5M690.500 377.700l-5 5"/></g><circle cx="662" cy="380.200" r="1" fill="#0c0d12"/>';
s += t(700, 384.300, 35, '76.745K', '#2f8a5c', 10) + t(740, 384.300, 58, 'không có sẵn', '#d2d3d6', 10, 'font-weight="500"');
s += '<circle cx="595.500" cy="547" r="12" fill="#2c2f3e"/><path d="M588 551.500a4 4 0 0 1 1-6.500q4-5 8-1.800 5 .8 5.500 4.300 1.500 2 0 4Z" fill="#35a2ef"/><path d="M589 551.500l5-4 3.500 3 4-3.500" fill="none" stroke="#2c2f3e" stroke-width="1.500"/>';
$('chart').innerHTML = s;

document.fonts.ready.then(() => document.querySelectorAll('[data-w]').forEach(e => {
  const n = [...e.textContent].length, target = +e.dataset.w;
  let w = e.getBoundingClientRect().width;
  if (n < 2 || !w) return;
  if (target < w && !('keep' in e.dataset)) {
    e.style.fontSize = parseFloat(getComputedStyle(e).fontSize) * Math.max(.91, target / w) + 'px';
    w = e.getBoundingClientRect().width;
  }
  e.style.letterSpacing = (target - w) / n + 'px';
}));
</script>
</body>
</html>
